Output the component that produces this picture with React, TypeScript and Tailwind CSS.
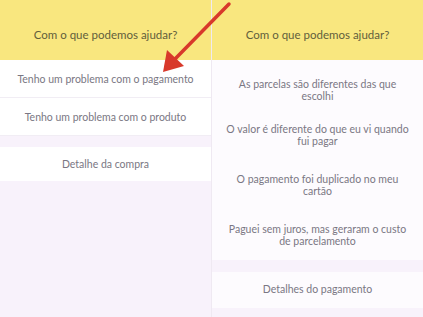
const leftItems = [
  'Tenho um problema com o pagamento',
  'Tenho um problema com o produto',
];

const rightItems = [
  ['As parcelas são diferentes das que', 'escolhi'],
  ['O valor é diferente do que eu vi quando', 'fui pagar'],
  ['O pagamento foi duplicado no meu', 'cartão'],
  ['Paguei sem juros, mas geraram o custo', 'de parcelamento'],
];

function Header() {
  return (
    <div className="flex h-[60px] items-center justify-center bg-[#f9e77f] pt-[10px] text-[11.5px] text-[#625e3c]">
      Com o que podemos ajudar?
    </div>
  );
}

export default function App() {
  return (
    <div
      className="relative flex h-[317px] w-[423px] overflow-hidden bg-[#f8f2fb] text-[#7a7783]"
      style={{ fontFamily: 'Lato, "Open Sans", sans-serif' }}
    >
      <div className="flex w-[212px] flex-col border-r border-[#efe9f2]">
        <Header />
        <div className="flex flex-col bg-white">
          {leftItems.map((item) => (
            <div
              key={item}
              className="flex h-[38px] items-center justify-center border-b border-[#f1edf4] pt-[2px] text-[10.5px]"
            >
              {item}
            </div>
          ))}
        </div>
        <div className="mt-[11px] flex h-[34px] items-center justify-center bg-white pt-[2px] text-[10.5px]">
          Detalhe da compra
        </div>
      </div>

      <div className="flex flex-1 flex-col">
        <Header />
        <div className="flex flex-col bg-[#fdfbfe]">
          {rightItems.map(([a, b], i) => (
            <div
              key={a}
              className={
                i === 0
                  ? 'flex h-[50px] flex-col items-center justify-center pt-[10px] text-center text-[10.5px] leading-[12px]'
                  : 'flex h-[50px] flex-col items-center justify-center text-center text-[10.5px] leading-[12px]'
              }
            >
              <span>{a}</span>
              <span>{b}</span>
            </div>
          ))}
        </div>
        <div className="mt-[12px] flex h-[36px] items-center justify-center bg-[#fdfbfe] text-[10.5px]">
          Detalhes do pagamento
        </div>
      </div>

      <svg className="absolute left-0 top-0" width="423" height="317" viewBox="0 0 423 317">
        <line x1="229" y1="4" x2="175" y2="59" stroke="#d8392b" strokeWidth="3.5" strokeLinecap="round" />
        <polygon points="163,72 167,50 184,66" fill="#d8392b" />
      </svg>
    </div>
  );
}
